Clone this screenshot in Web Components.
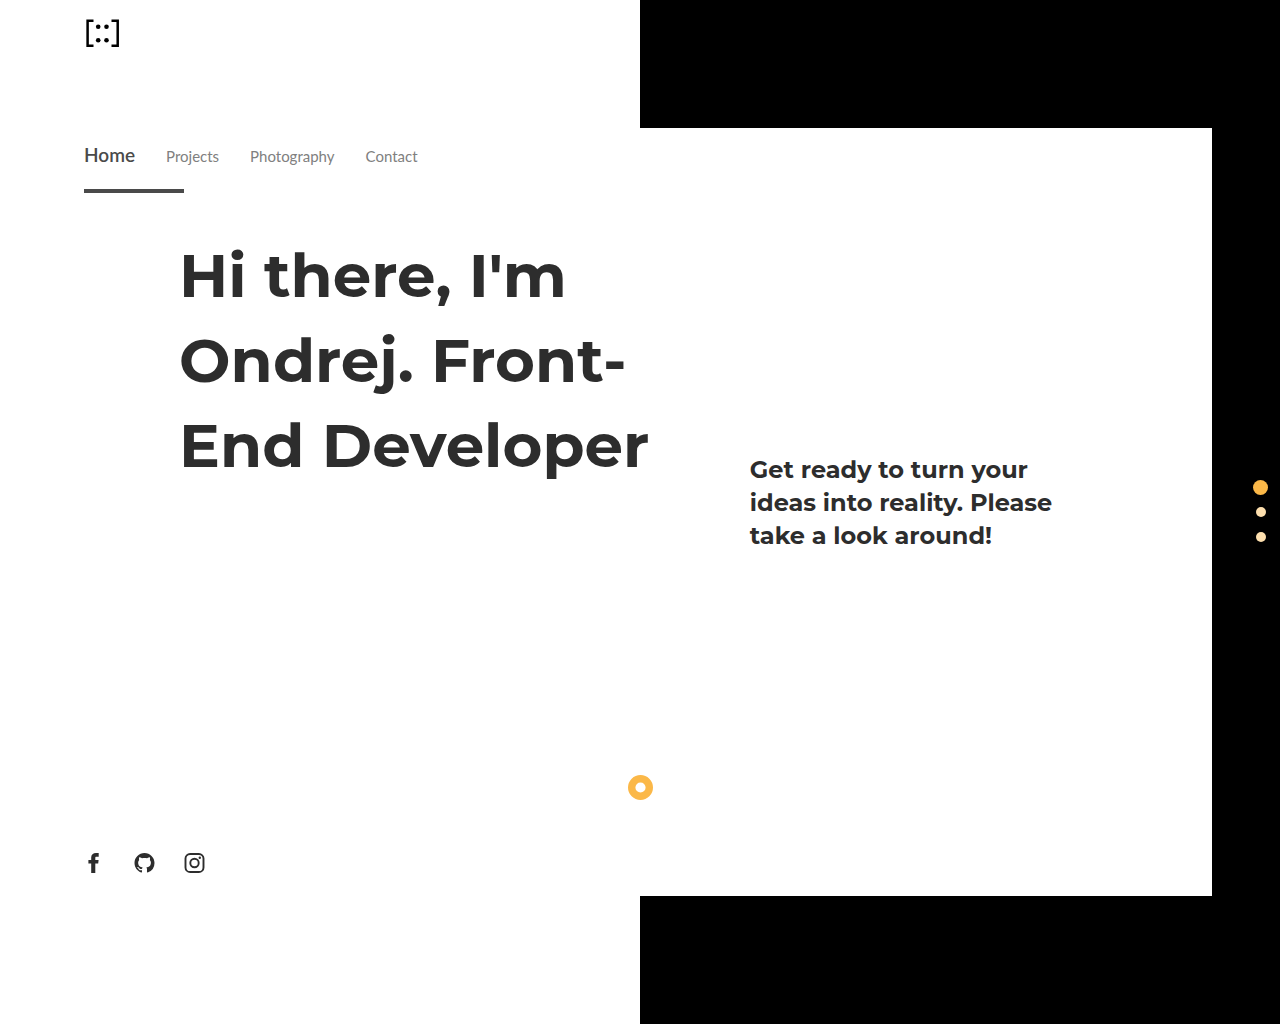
<!DOCTYPE html>
<html lang="en">
<head>
<meta charset="utf-8">
<meta name="viewport" content="width=device-width, initial-scale=1">
<title>Ondrej</title>
<style>
body { margin: 0; background: #fff; color: #2d2d2d; font-family: Montserrat, Inter, sans-serif; }
</style>
</head>
<body>
<portfolio-page>
  <site-logo slot="header"></site-logo>
  <site-nav>
    <nav-link href="#home" current>Home</nav-link>
    <nav-link href="#projects">Projects</nav-link>
    <nav-link href="#photography">Photography</nav-link>
    <nav-link href="#contact">Contact</nav-link>
  </site-nav>
  <hero-intro>
    <span slot="title">Hi there, I'm Ondrej. Front-End Developer</span>
    <span slot="lead">Get ready to turn your ideas into reality. Please take a look around!</span>
  </hero-intro>
  <scroll-ring></scroll-ring>
  <social-links></social-links>
  <page-dots slot="aside"></page-dots>
</portfolio-page>
<script>
function define(name, markup, setup) {
  const template = document.createElement('template');
  template.innerHTML = markup;
  customElements.define(name, class extends HTMLElement {
    constructor() {
      super();
      this.attachShadow({ mode: 'open' }).append(template.content.cloneNode(true));
    }
    connectedCallback() { if (setup) setup(this, this.shadowRoot); }
  });
}

define('portfolio-page', `
  <style>
    :host {
      display: grid; min-height: 100vh;
      grid-template-columns: minmax(0, 1fr) 68px; grid-template-rows: 1fr 6fr 1fr;
      background: linear-gradient(90deg, #fff 50%, #000 50%);
    }
    header { grid-column: 1 / -1; padding: 18px 84px; }
    main { display: flex; flex-direction: column; background: #fff; }
    aside { display: flex; align-items: center; justify-content: flex-end; padding-right: 7px; background: #000; }
  </style>
  <header><slot name="header"></slot></header>
  <main><slot></slot></main>
  <aside><slot name="aside"></slot></aside>`);

define('site-logo', `
  <style>
    :host, a, svg { display: block; }
    a { width: 38px; }
  </style>
  <a href="#home" aria-label="Home page">
    <svg width="38" height="30" viewBox="0 0 38 30">
      <path d="M9.5 2.700H3.600v25h5.900M27.500 2.700h6.200v25h-6.200" fill="none" stroke="#000" stroke-width="2.500"/>
      <g fill="#000"><circle cx="14.200" cy="8.800" r="2.300"/><circle cx="22.500" cy="8.800" r="2.300"/><circle cx="14.200" cy="22.200" r="2.300"/><circle cx="22.500" cy="22.200" r="2.300"/></g>
    </svg>
  </a>`);

define('site-nav', `
  <style>
    :host { display: block; padding: 11px 84px 0; font-family: "Avenir Next", Lato, sans-serif; }
    nav { display: flex; align-items: baseline; gap: 31px; height: 32px; }
  </style>
  <nav><slot></slot></nav>`);

define('nav-link', `
  <style>
    :host { display: block; }
    a { position: relative; display: block; color: #808080; font-size: 15px; line-height: 32px; text-decoration: none; }
    :host([current]) a { color: #4a4a4a; font-size: 19px; font-weight: 600; }
    :host([current]) a::after { content: ""; position: absolute; left: 0; top: 50px; width: 100px; height: 4px; background: #4a4a4a; }
  </style>
  <a><slot></slot></a>`,
  (host, root) => root.querySelector('a').setAttribute('href', host.getAttribute('href')));

define('hero-intro', `
  <style>
    :host { display: grid; flex: 1; grid-template-columns: 21fr 17fr; padding: 62px 0 0 179px; }
    h1 { margin: 0; max-width: 500px; font-size: 61px; line-height: 85px; font-weight: 700; }
    p { margin: 220px 0 0; max-width: 320px; font-size: 24px; line-height: 33px; font-weight: 700; }
  </style>
  <h1><slot name="title"></slot></h1>
  <p><slot name="lead"></slot></p>`);

define('scroll-ring', `
  <style>
    :host { display: flex; justify-content: center; padding-left: 68px; }
    svg { display: block; }
  </style>
  <svg width="26" height="26" viewBox="0 0 26 26" aria-hidden="true"><circle cx="13.500" cy="13.500" r="8.800" fill="none" stroke="#fbb848" stroke-width="7.400"/></svg>`);

define('social-links', `
  <style>
    :host { display: flex; gap: 28px; padding: 52px 84px 22px; }
    a { display: block; color: #2d2d2d; }
    svg { display: block; width: 22px; height: 22px; }
  </style>
  <a href="#facebook" aria-label="Facebook"><svg viewBox="0 0 22 22"><path fill="currentColor" d="M14.700 1v3.700h-2.200c-1 0-1.200.5-1.200 1.300v2h3.300l-.4 3.600h-2.900V21H7.200v-9.400H4.400V8h2.800V5.400C7.200 2.600 9.200 1 12 1z"/></svg></a>
  <a href="#github" aria-label="GitHub"><svg viewBox="0 0 22 22"><path fill="currentColor" transform="translate(0.500 1.100) scale(1.250)" d="M8 0C3.580 0 0 3.580 0 8c0 3.540 2.290 6.530 5.470 7.590.4.070.55-.17.55-.38 0-.19-.01-.82-.01-1.490-2.010.37-2.530-.49-2.690-.94-.09-.23-.48-.94-.82-1.130-.28-.15-.68-.52-.01-.53.63-.01 1.080.58 1.230.82.72 1.210 1.870.87 2.330.66.070-.52.28-.87.510-1.070-1.780-.2-3.640-.89-3.640-3.950 0-.87.310-1.590.82-2.150-.08-.2-.36-1.020.08-2.120 0 0 .67-.21 2.200.82.64-.18 1.320-.27 2-.27s1.360.09 2 .27c1.530-1.040 2.200-.82 2.200-.82.44 1.100.16 1.920.08 2.120.51.56.82 1.270.82 2.150 0 3.070-1.870 3.750-3.650 3.950.29.25.54.73.54 1.480 0 1.070-.01 1.930-.01 2.200 0 .21.15.46.55.38A8.010 8.010 0 0 0 16 8c0-4.420-3.580-8-8-8z"/></svg></a>
  <a href="#instagram" aria-label="Instagram"><svg viewBox="0 0 22 22"><g fill="none" stroke="currentColor" stroke-width="1.900"><rect x="1.500" y="2" width="18" height="18" rx="4.600"/><circle cx="10.500" cy="11" r="4.200"/></g><circle cx="15.800" cy="5.700" r="1.200" fill="currentColor"/></svg></a>`);

define('page-dots', `
  <style>
    :host { display: block; }
    button { display: flex; align-items: center; justify-content: center; width: 25px; height: 25px; padding: 0; border: 0; background: none; }
    button::before { content: ""; width: 10px; height: 10px; border-radius: 50%; background: #fddfae; }
    button[aria-current]::before { width: 15px; height: 15px; background: #fbb848; }
  </style>
  <button type="button" aria-label="Section 1" aria-current="true"></button>
  <button type="button" aria-label="Section 2"></button>
  <button type="button" aria-label="Section 3"></button>`);
</script>
</body>
</html>
